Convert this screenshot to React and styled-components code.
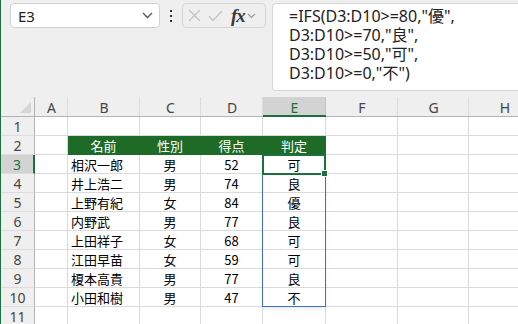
import React from 'react';
import styled, { createGlobalStyle } from 'styled-components';

const GlobalStyle = createGlobalStyle`
    html, body {
        margin:0;
        padding:0;
        background:#efefef;
        overflow:hidden;
    }
    body {
        font-family:"Noto Sans", "Noto Sans CJK JP", sans-serif;
    }
`;

const COLS = [34, 33, 72, 61, 62, 63, 72, 71, 72];
const ROW_H = 19;
const HEAD_H = 20;

const Page = styled.div`
    width:518px;
    height:324px;
    display:flex;
    flex-direction:column;
    border-left:1px solid #1e7145;
    box-sizing:border-box;
    overflow:hidden;
    background:#efefef;
`;

const FormulaArea = styled.div`
    height:97px;
    display:flex;
    flex-direction:row;
    align-items:flex-start;
    padding:3px 0 0 9px;
    box-sizing:border-box;
    flex-shrink:0;
`;

const NameBox = styled.div`
    width:150px;
    height:25px;
    box-sizing:border-box;
    background:#fff;
    border:1px solid #d1d1d1;
    border-radius:4px;
    display:flex;
    align-items:center;
    justify-content:space-between;
    padding:0 6px 0 7px;
    font-size:15px;
    color:#222;
`;

const Dots = styled.div`
    width:22px;
    height:25px;
    display:flex;
    align-items:center;
    justify-content:center;
`;

const FxBox = styled.div`
    width:84px;
    height:25px;
    box-sizing:border-box;
    border:1px solid #d6d6d6;
    border-radius:4px;
    display:flex;
    align-items:center;
    padding:0 4px 0 5px;
    gap:7px;
`;

const FxText = styled.span`
    font-family:"Liberation Serif", "DejaVu Serif", serif;
    font-style:italic;
    font-weight:bold;
    font-size:19px;
    line-height:19px;
    color:#3a3a3a;
    margin-left:1px;
    letter-spacing:-1px;
`;

const FormulaBox = styled.div`
    flex:1;
    margin-left:6px;
    height:88px;
    box-sizing:border-box;
    background:#fff;
    border:1px solid #d6d6d6;
    border-right:none;
    border-radius:4px 0 0 4px;
    padding:3px 0 0 16px;
    font-size:16px;
    line-height:19px;
    color:#222;
    white-space:pre;
`;

const Sheet = styled.div`
    position:relative;
    display:grid;
    grid-template-columns:${COLS.map(c => c + 'px').join(' ')};
    grid-auto-rows:${ROW_H}px;
    grid-template-rows:${HEAD_H}px;
    background:#fff;
`;

const Corner = styled.div`
    background:#efefef;
    border-right:1px solid #b4b4b4;
    border-bottom:1px solid #b4b4b4;
    box-sizing:border-box;
    position:relative;
    &::after {
        content:"";
        position:absolute;
        right:3px;
        bottom:3px;
        width:0;
        height:0;
        border-left:11px solid transparent;
        border-bottom:11px solid #d6d6d6;
    }
`;

const ColHead = styled.div`
    background:${p => (p.$active ? '#d3d3d3' : '#efefef')};
    color:${p => (p.$active ? '#1e6f3e' : '#444')};
    border-bottom:${p => (p.$active ? '2px solid #1e6f3e' : '1px solid #b4b4b4')};
    box-shadow:inset -1px 0 0 ${p => (p.$active ? '#c4c4c4' : '#dcdcdc')};
    box-sizing:border-box;
    display:flex;
    align-items:center;
    justify-content:center;
    font-size:14px;
    padding-top:2px;
`;

const RowHead = styled.div`
    background:${p => (p.$active ? '#d3d3d3' : '#efefef')};
    color:${p => (p.$active ? '#1e6f3e' : '#444')};
    border-right:${p => (p.$active ? '2px solid #1e6f3e' : '1px solid #b4b4b4')};
    border-bottom:1px solid #dcdcdc;
    box-sizing:border-box;
    display:flex;
    align-items:center;
    justify-content:center;
    font-size:14px;
`;

const Cell = styled.div`
    background:${p => (p.$head ? '#1d6b27' : '#fff')};
    color:${p => (p.$head ? '#fff' : '#000')};
    border-right:1px solid ${p => (p.$head ? '#1d6b27' : '#dadada')};
    border-bottom:1px solid ${p => (p.$head ? '#1d6b27' : '#dadada')};
    box-sizing:border-box;
    display:flex;
    align-items:center;
    justify-content:${p => (p.$align === 'left' ? 'flex-start' : 'center')};
    padding-left:${p => (p.$align === 'left' ? '3px' : '0')};
    font-size:13px;
    font-family:"Noto Sans CJK JP", "Noto Sans", sans-serif;
    overflow:hidden;
    white-space:nowrap;
`;

const SpillRange = styled.div`
    position:absolute;
    box-sizing:border-box;
    border:1px solid #3d6fd1;
    box-shadow:0 2px 4px rgba(0,0,0,0.08);
    pointer-events:none;
`;

const ActiveCell = styled.div`
    position:absolute;
    box-sizing:border-box;
    border:2px solid #1e6f3e;
    pointer-events:none;
`;

const FillHandle = styled.div`
    position:absolute;
    width:5px;
    height:5px;
    background:#1e6f3e;
    border:1px solid #fff;
    right:-4px;
    bottom:-4px;
`;

const rows = [
    ['相沢一郎', '男', 52, '可'],
    ['井上浩二', '男', 74, '良'],
    ['上野有紀', '女', 84, '優'],
    ['内野武', '男', 77, '良'],
    ['上田祥子', '女', 68, '可'],
    ['江田早苗', '女', 59, '可'],
    ['榎本高貴', '男', 77, '良'],
    ['小田和樹', '男', 47, '不'],
];

const letters = ['A', 'B', 'C', 'D', 'E', 'F', 'G', 'H'];

const colX = i => COLS.slice(0, i).reduce((a, b) => a + b, 0);

const Chevron = () => (
    <svg width="11" height="7" viewBox="0 0 11 7">
        <polyline points="1,1 5.5,5.5 10,1" fill="none" stroke="#555" strokeWidth="1.3" />
    </svg>
);

function App() {
    const cells = [];
    cells.push(<Corner key="corner" />);
    letters.forEach(l => cells.push(<ColHead key={'h' + l} $active={l === 'E'}>{l}</ColHead>));

    for (let r = 1; r <= 11; r++) {
        cells.push(<RowHead key={'r' + r} $active={r === 3}>{r}</RowHead>);
        letters.forEach((l, ci) => {
            let content = '';
            let head = false;
            let align = 'center';
            if (r === 2 && ci >= 1 && ci <= 4) {
                head = true;
                content = ['名前', '性別', '得点', '判定'][ci - 1];
            } else if (r >= 3 && r <= 10 && ci >= 1 && ci <= 4) {
                content = rows[r - 3][ci - 1];
                if (ci === 1) align = 'left';
            }
            cells.push(
                <Cell key={l + r} $head={head} $align={align}>{content}</Cell>
            );
        });
    }

    const eLeft = colX(5);
    const row3Top = HEAD_H + ROW_H * 2;

    return (
        <Page>
            <GlobalStyle />
            <FormulaArea>
                <NameBox>
                    <span>E3</span>
                    <Chevron />
                </NameBox>
                <Dots>
                    <svg width="4" height="14" viewBox="0 0 4 14">
                        <rect x="1" y="1" width="2" height="2" fill="#333" />
                        <rect x="1" y="6" width="2" height="2" fill="#333" />
                        <rect x="1" y="11" width="2" height="2" fill="#333" />
                    </svg>
                </Dots>
                <FxBox>
                    <svg width="13" height="13" viewBox="0 0 13 13">
                        <path d="M1 1 L12 12 M12 1 L1 12" stroke="#c2c2c2" strokeWidth="1.2" fill="none" />
                    </svg>
                    <svg width="15" height="12" viewBox="0 0 15 12">
                        <polyline points="1,6 5,10.5 14,1" stroke="#c2c2c2" strokeWidth="1.2" fill="none" />
                    </svg>
                    <FxText>fx</FxText>
                    <svg width="9" height="6" viewBox="0 0 9 6" style={{ marginLeft: -5 }}>
                        <polyline points="1,1 4.5,4.5 8,1" fill="none" stroke="#999" strokeWidth="1.1" />
                    </svg>
                </FxBox>
                <FormulaBox>
                    {'=IFS(D3:D10>=80,"優",\nD3:D10>=70,"良",\nD3:D10>=50,"可",\nD3:D10>=0,"不")'}
                </FormulaBox>
            </FormulaArea>
            <Sheet>
                {cells}
                <SpillRange
                    style={{ left: eLeft - 1, top: row3Top - 1, width: COLS[5] + 1, height: ROW_H * 8 + 1 }}
                />
                <ActiveCell
                    style={{ left: eLeft - 1, top: row3Top - 1, width: COLS[5] + 1, height: ROW_H + 2 }}
                >
                    <FillHandle />
                </ActiveCell>
            </Sheet>
        </Page>
    );
}

export default App;
